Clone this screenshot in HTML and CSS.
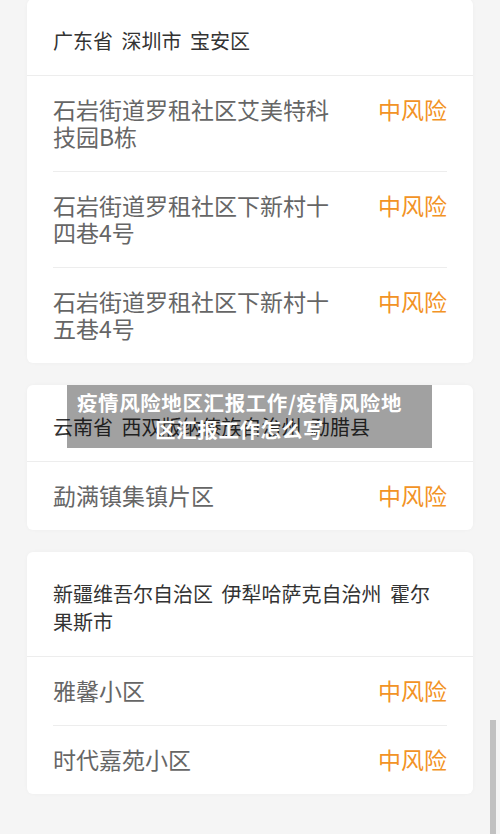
FILE: index.html
```html
<!DOCTYPE html>
<html lang="zh-CN">
  <head>
    <meta charset="UTF-8" />
    <meta name="viewport" content="width=device-width, initial-scale=1.0" />
    <title>疫情风险地区</title>
    <link rel="stylesheet" href="styles.css">
  </head>
  <body>
    <div class="list">
      <div class="card">
        <div class="card-head">广东省 深圳市 宝安区</div>
        <div class="row">
          <span class="name">石岩街道罗租社区艾美特科技园B栋</span>
          <span class="risk">中风险</span>
        </div>
        <div class="row">
          <span class="name">石岩街道罗租社区下新村十四巷4号</span>
          <span class="risk">中风险</span>
        </div>
        <div class="row">
          <span class="name">石岩街道罗租社区下新村十五巷4号</span>
          <span class="risk">中风险</span>
        </div>
      </div>

      <div class="card">
        <div class="card-head">云南省 西双版纳傣族自治州 勐腊县</div>
        <div class="row">
          <span class="name">勐满镇集镇片区</span>
          <span class="risk">中风险</span>
        </div>
      </div>

      <div class="card">
        <div class="card-head">新疆维吾尔自治区 伊犁哈萨克自治州 霍尔果斯市</div>
        <div class="row">
          <span class="name">雅馨小区</span>
          <span class="risk">中风险</span>
        </div>
        <div class="row">
          <span class="name">时代嘉苑小区</span>
          <span class="risk">中风险</span>
        </div>
      </div>
    </div>

    <div class="caption">疫情风险地区汇报工作/疫情风险地区汇报工作怎么写</div>
    <div class="scrollbar"></div>
  </body>
</html>
```

FILE: styles.css
```css
body {
  margin: 0;
  background-color: #f5f5f5;
  font-family: "Noto Sans CJK SC", "Liberation Sans", sans-serif;
}

.list {
  margin-top: -1px;
  padding: 0 27px 40px 27px;
}

.card {
  background-color: #fff;
  border-radius: 6px;
  margin-bottom: 22px;
  box-shadow: 0 0 4px rgba(0, 0, 0, 0.03);
}

.card-head {
  padding: 28px 40px 20px 26px;
  font-size: 20px;
  line-height: 28px;
  word-spacing: 4px;
  color: #333;
  border-bottom: 1px solid #ededed;
}

.row {
  display: flex;
  justify-content: space-between;
  align-items: flex-start;
  margin: 0 26px;
  padding: 20px 0 21px 0;
  font-size: 23px;
  line-height: 27px;
  border-bottom: 1px solid #ededed;
}

.row:last-child {
  border-bottom: none;
}

.name {
  max-width: 290px;
  color: #666;
}

.risk {
  color: #f29325;
  white-space: nowrap;
}

.caption {
  position: absolute;
  left: 67px;
  top: 385px;
  width: 365px;
  height: 63px;
  box-sizing: border-box;
  padding: 4px 26px 4px 6px;
  background-color: rgba(0, 0, 0, 0.37);
  color: #fff;
  font-size: 20.5px;
  font-weight: bold;
  line-height: 27px;
  letter-spacing: 0.6px;
  text-align: center;
}

.scrollbar {
  position: fixed;
  right: 4px;
  top: 720px;
  bottom: 0;
  width: 6px;
  background-color: #c1c1c1;
}
```
